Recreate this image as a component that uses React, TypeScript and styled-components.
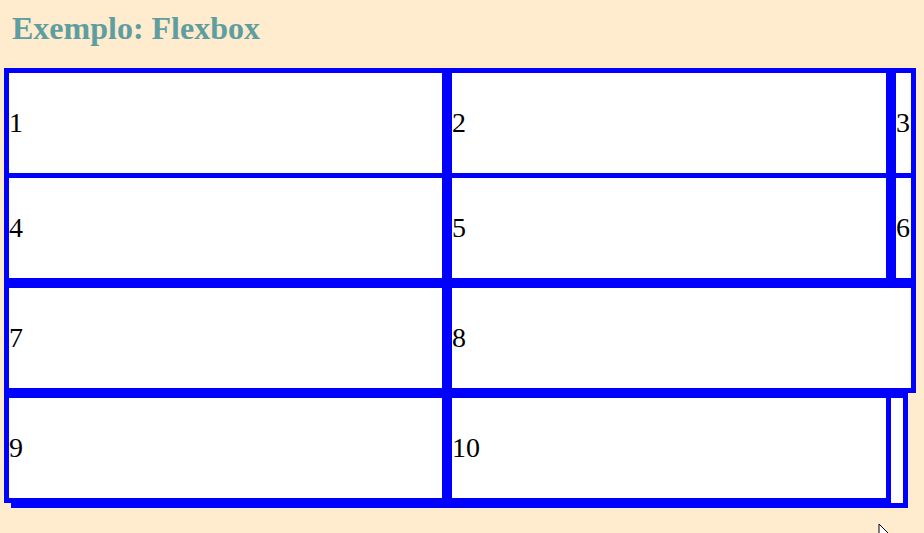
import styled, { createGlobalStyle } from 'styled-components';

const GlobalStyle = createGlobalStyle`
  html, body {
    margin: 0;
    background: #ffebcd;
    font-family: "Liberation Serif", "Times New Roman", serif;
    overflow: hidden;
  }
`;

const Page = styled.div`
  position: relative;
  height: 533px;
  padding: 10px 0 0 4px;
  box-sizing: border-box;
`;

const Title = styled.h1`
  margin: 0 0 22px 8px;
  font-size: 32px;
  line-height: 36px;
  font-weight: bold;
  color: #5f9ea0;
`;

const Board = styled.div`
  display: flex;
  flex-direction: column;
  width: 912px;
`;

const Row = styled.div<{ $overlap?: boolean }>`
  display: flex;
  margin-top: ${(p) => (p.$overlap ? '-5px' : '0')};
`;

// the wrapped last line keeps its own border, shifted in from the left
const TailRow = styled.div`
  display: flex;
  box-sizing: border-box;
  width: 897px;
  margin-left: 7px;
  border: 5px solid #0000ff;
  background: #fff;

  & > div {
    margin-top: -5px;
  }
  & > div:first-child {
    margin-left: -12px;
  }
`;

const Cell = styled.div<{ $w: number }>`
  box-sizing: border-box;
  flex: none;
  display: flex;
  align-items: center;
  width: ${(p) => p.$w}px;
  height: 110px;
  border: 5px solid #0000ff;
  background: #fff;
  color: #000;
  font-size: 28px;
`;

const Cursor = styled.svg`
  position: absolute;
  left: 878px;
  top: 523px;
`;

export default function App() {
  return (
    <>
      <GlobalStyle />
      <Page>
        <Title>Exemplo: Flexbox</Title>
        <Board>
          <Row>
            <Cell $w={443}>1</Cell>
            <Cell $w={444}>2</Cell>
            <Cell $w={25}>3</Cell>
          </Row>
          <Row $overlap>
            <Cell $w={443}>4</Cell>
            <Cell $w={444}>5</Cell>
            <Cell $w={25}>6</Cell>
          </Row>
          <Row>
            <Cell $w={443}>7</Cell>
            <Cell $w={469}>8</Cell>
          </Row>
          <TailRow>
            <Cell $w={443}>9</Cell>
            <Cell $w={444}>10</Cell>
          </TailRow>
        </Board>
        <Cursor width="14" height="22" viewBox="0 0 14 22">
          <path d="M1 1 L1 17 L5 13 L8 20 L10 19 L7 12 L12 12 Z" fill="#fff" stroke="#000" strokeWidth="1" />
        </Cursor>
      </Page>
    </>
  );
}
